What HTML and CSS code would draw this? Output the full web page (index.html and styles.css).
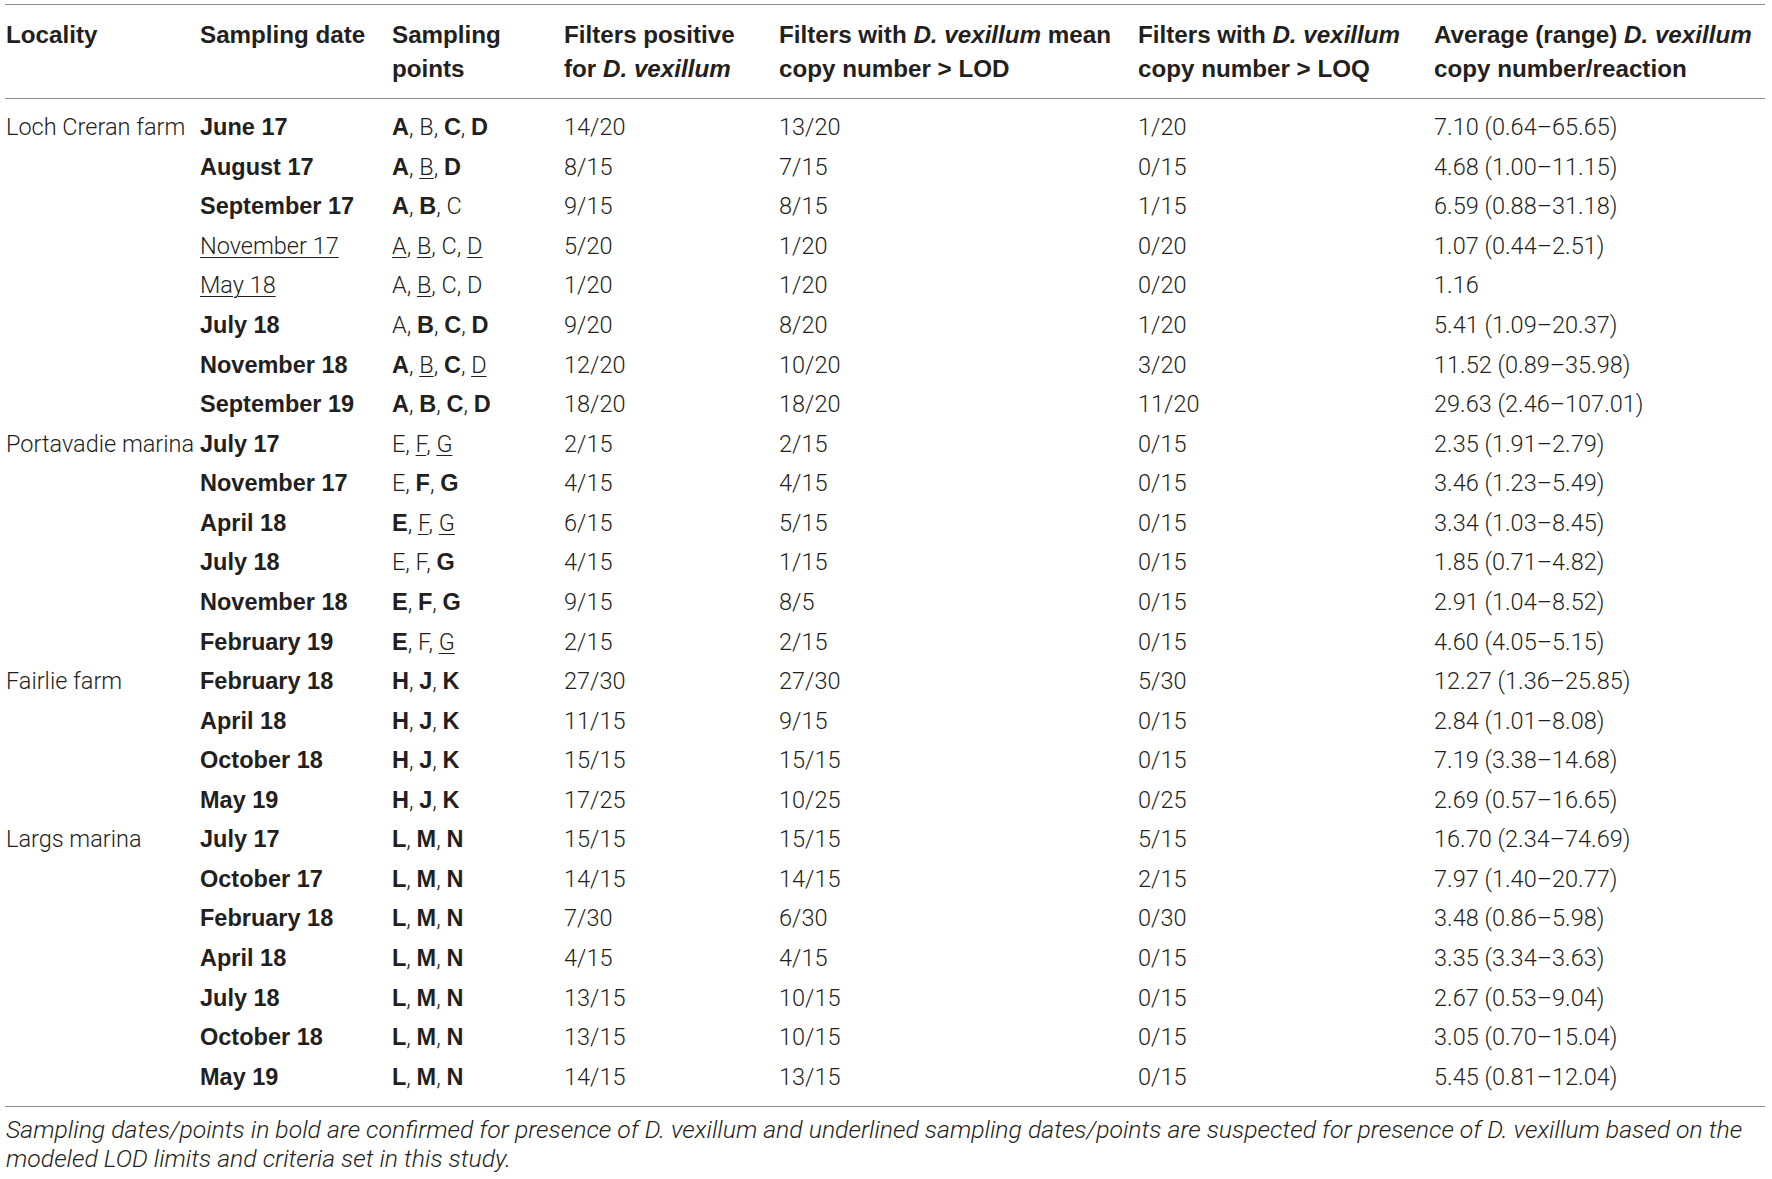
FILE: index.html
```html
<!DOCTYPE html>
<html>
<head>
<meta charset="utf-8">
<link rel="stylesheet" href="styles.css">
</head>
<body>
<div class="page">
<table class="data">
<colgroup>
<col class="c1"><col class="c2"><col class="c3"><col class="c4"><col class="c5"><col class="c6"><col class="c7">
</colgroup>
<thead>
<tr>
<th>Locality</th>
<th>Sampling date</th>
<th>Sampling<br>points</th>
<th>Filters positive<br>for <i>D. vexillum</i></th>
<th>Filters with <i>D. vexillum</i> mean<br>copy number &gt; LOD</th>
<th>Filters with <i>D. vexillum</i><br>copy number &gt; LOQ</th>
<th>Average (range) <i>D. vexillum</i><br>copy number/reaction</th>
</tr>
</thead>
<tbody>
<tr><td>Loch Creran farm</td><td><span class="b">June 17</span></td><td><span class="b">A</span>, B, <span class="b">C</span>, <span class="b">D</span></td><td>14/20</td><td>13/20</td><td>1/20</td><td>7.10 (0.64–65.65)</td></tr>
<tr><td></td><td><span class="b">August 17</span></td><td><span class="b">A</span>, <span class="u">B</span>, <span class="b">D</span></td><td>8/15</td><td>7/15</td><td>0/15</td><td>4.68 (1.00–11.15)</td></tr>
<tr><td></td><td><span class="b">September 17</span></td><td><span class="b">A</span>, <span class="b">B</span>, C</td><td>9/15</td><td>8/15</td><td>1/15</td><td>6.59 (0.88–31.18)</td></tr>
<tr><td></td><td><span class="u">November 17</span></td><td><span class="u">A</span>, <span class="u">B</span>, C, <span class="u">D</span></td><td>5/20</td><td>1/20</td><td>0/20</td><td>1.07 (0.44–2.51)</td></tr>
<tr><td></td><td><span class="u">May 18</span></td><td>A, <span class="u">B</span>, C, D</td><td>1/20</td><td>1/20</td><td>0/20</td><td>1.16</td></tr>
<tr><td></td><td><span class="b">July 18</span></td><td>A, <span class="b">B</span>, <span class="b">C</span>, <span class="b">D</span></td><td>9/20</td><td>8/20</td><td>1/20</td><td>5.41 (1.09–20.37)</td></tr>
<tr><td></td><td><span class="b">November 18</span></td><td><span class="b">A</span>, <span class="u">B</span>, <span class="b">C</span>, <span class="u">D</span></td><td>12/20</td><td>10/20</td><td>3/20</td><td>11.52 (0.89–35.98)</td></tr>
<tr><td></td><td><span class="b">September 19</span></td><td><span class="b">A</span>, <span class="b">B</span>, <span class="b">C</span>, <span class="b">D</span></td><td>18/20</td><td>18/20</td><td>11/20</td><td>29.63 (2.46–107.01)</td></tr>
<tr><td>Portavadie marina</td><td><span class="b">July 17</span></td><td>E, <span class="u">F</span>, <span class="u">G</span></td><td>2/15</td><td>2/15</td><td>0/15</td><td>2.35 (1.91–2.79)</td></tr>
<tr><td></td><td><span class="b">November 17</span></td><td>E, <span class="b">F</span>, <span class="b">G</span></td><td>4/15</td><td>4/15</td><td>0/15</td><td>3.46 (1.23–5.49)</td></tr>
<tr><td></td><td><span class="b">April 18</span></td><td><span class="b">E</span>, <span class="u">F</span>, <span class="u">G</span></td><td>6/15</td><td>5/15</td><td>0/15</td><td>3.34 (1.03–8.45)</td></tr>
<tr><td></td><td><span class="b">July 18</span></td><td>E, F, <span class="b">G</span></td><td>4/15</td><td>1/15</td><td>0/15</td><td>1.85 (0.71–4.82)</td></tr>
<tr><td></td><td><span class="b">November 18</span></td><td><span class="b">E</span>, <span class="b">F</span>, <span class="b">G</span></td><td>9/15</td><td>8/5</td><td>0/15</td><td>2.91 (1.04–8.52)</td></tr>
<tr><td></td><td><span class="b">February 19</span></td><td><span class="b">E</span>, F, <span class="u">G</span></td><td>2/15</td><td>2/15</td><td>0/15</td><td>4.60 (4.05–5.15)</td></tr>
<tr><td>Fairlie farm</td><td><span class="b">February 18</span></td><td><span class="b">H</span>, <span class="b">J</span>, <span class="b">K</span></td><td>27/30</td><td>27/30</td><td>5/30</td><td>12.27 (1.36–25.85)</td></tr>
<tr><td></td><td><span class="b">April 18</span></td><td><span class="b">H</span>, <span class="b">J</span>, <span class="b">K</span></td><td>11/15</td><td>9/15</td><td>0/15</td><td>2.84 (1.01–8.08)</td></tr>
<tr><td></td><td><span class="b">October 18</span></td><td><span class="b">H</span>, <span class="b">J</span>, <span class="b">K</span></td><td>15/15</td><td>15/15</td><td>0/15</td><td>7.19 (3.38–14.68)</td></tr>
<tr><td></td><td><span class="b">May 19</span></td><td><span class="b">H</span>, <span class="b">J</span>, <span class="b">K</span></td><td>17/25</td><td>10/25</td><td>0/25</td><td>2.69 (0.57–16.65)</td></tr>
<tr><td>Largs marina</td><td><span class="b">July 17</span></td><td><span class="b">L</span>, <span class="b">M</span>, <span class="b">N</span></td><td>15/15</td><td>15/15</td><td>5/15</td><td>16.70 (2.34–74.69)</td></tr>
<tr><td></td><td><span class="b">October 17</span></td><td><span class="b">L</span>, <span class="b">M</span>, <span class="b">N</span></td><td>14/15</td><td>14/15</td><td>2/15</td><td>7.97 (1.40–20.77)</td></tr>
<tr><td></td><td><span class="b">February 18</span></td><td><span class="b">L</span>, <span class="b">M</span>, <span class="b">N</span></td><td>7/30</td><td>6/30</td><td>0/30</td><td>3.48 (0.86–5.98)</td></tr>
<tr><td></td><td><span class="b">April 18</span></td><td><span class="b">L</span>, <span class="b">M</span>, <span class="b">N</span></td><td>4/15</td><td>4/15</td><td>0/15</td><td>3.35 (3.34–3.63)</td></tr>
<tr><td></td><td><span class="b">July 18</span></td><td><span class="b">L</span>, <span class="b">M</span>, <span class="b">N</span></td><td>13/15</td><td>10/15</td><td>0/15</td><td>2.67 (0.53–9.04)</td></tr>
<tr><td></td><td><span class="b">October 18</span></td><td><span class="b">L</span>, <span class="b">M</span>, <span class="b">N</span></td><td>13/15</td><td>10/15</td><td>0/15</td><td>3.05 (0.70–15.04)</td></tr>
<tr><td></td><td><span class="b">May 19</span></td><td><span class="b">L</span>, <span class="b">M</span>, <span class="b">N</span></td><td>14/15</td><td>13/15</td><td>0/15</td><td>5.45 (0.81–12.04)</td></tr>
</tbody>
</table>
<p class="note">Sampling dates/points in bold are confirmed for presence of D. vexillum and underlined sampling dates/points are suspected for presence of D. vexillum based on the<br>modeled LOD limits and criteria set in this study.</p>
</div>
</body>
</html>
```
FILE: styles.css
```css
html, body {
  margin: 0;
  padding: 0;
  background: #ffffff;
}
.page {
  padding: 4px 0 0 5px;
  width: 1760px;
  color: #231f20;
}
.data {
  border-collapse: collapse;
  table-layout: fixed;
  width: 1760px;
  border-top: 1px solid #8e8e8e;
  border-bottom: 1px solid #8e8e8e;
}
.c1 { width: 195px; }
.c2 { width: 192px; }
.c3 { width: 172px; }
.c4 { width: 215px; }
.c5 { width: 359px; }
.c6 { width: 296px; }
.c7 { width: 331px; }
.data th {
  font-family: "Liberation Sans", Arial, sans-serif;
  font-weight: 700;
  font-size: 24.2px;
  line-height: 34px;
  text-align: left;
  vertical-align: top;
  padding: 12.7px 0 12px 0;
  white-space: nowrap;
  border-bottom: 1px solid #8e8e8e;
}
.data th:first-child, .data td:first-child {
  padding-left: 1px;
}
.data td {
  font-family: Roboto, "Liberation Sans", sans-serif;
  font-weight: 300;
  font-size: 23.5px;
  line-height: 39.57px;
  height: 39.57px;
  padding: 0;
  vertical-align: top;
  white-space: nowrap;
}
.data tbody tr:first-child td {
  padding-top: 9.5px;
}
.data tbody tr:last-child td {
  padding-bottom: 9px;
}
.b {
  font-family: "Liberation Sans", Arial, sans-serif;
  font-weight: 700;
}
.u {
  text-decoration: underline;
  text-decoration-thickness: 1px;
  text-underline-offset: 3px;
}
.note {
  margin: 0;
  padding: 9px 0 0 1px;
  font-family: Roboto, "Liberation Sans", sans-serif;
  font-weight: 300;
  font-style: italic;
  font-size: 24.8px;
  line-height: 28.5px;
  white-space: nowrap;
}
```
